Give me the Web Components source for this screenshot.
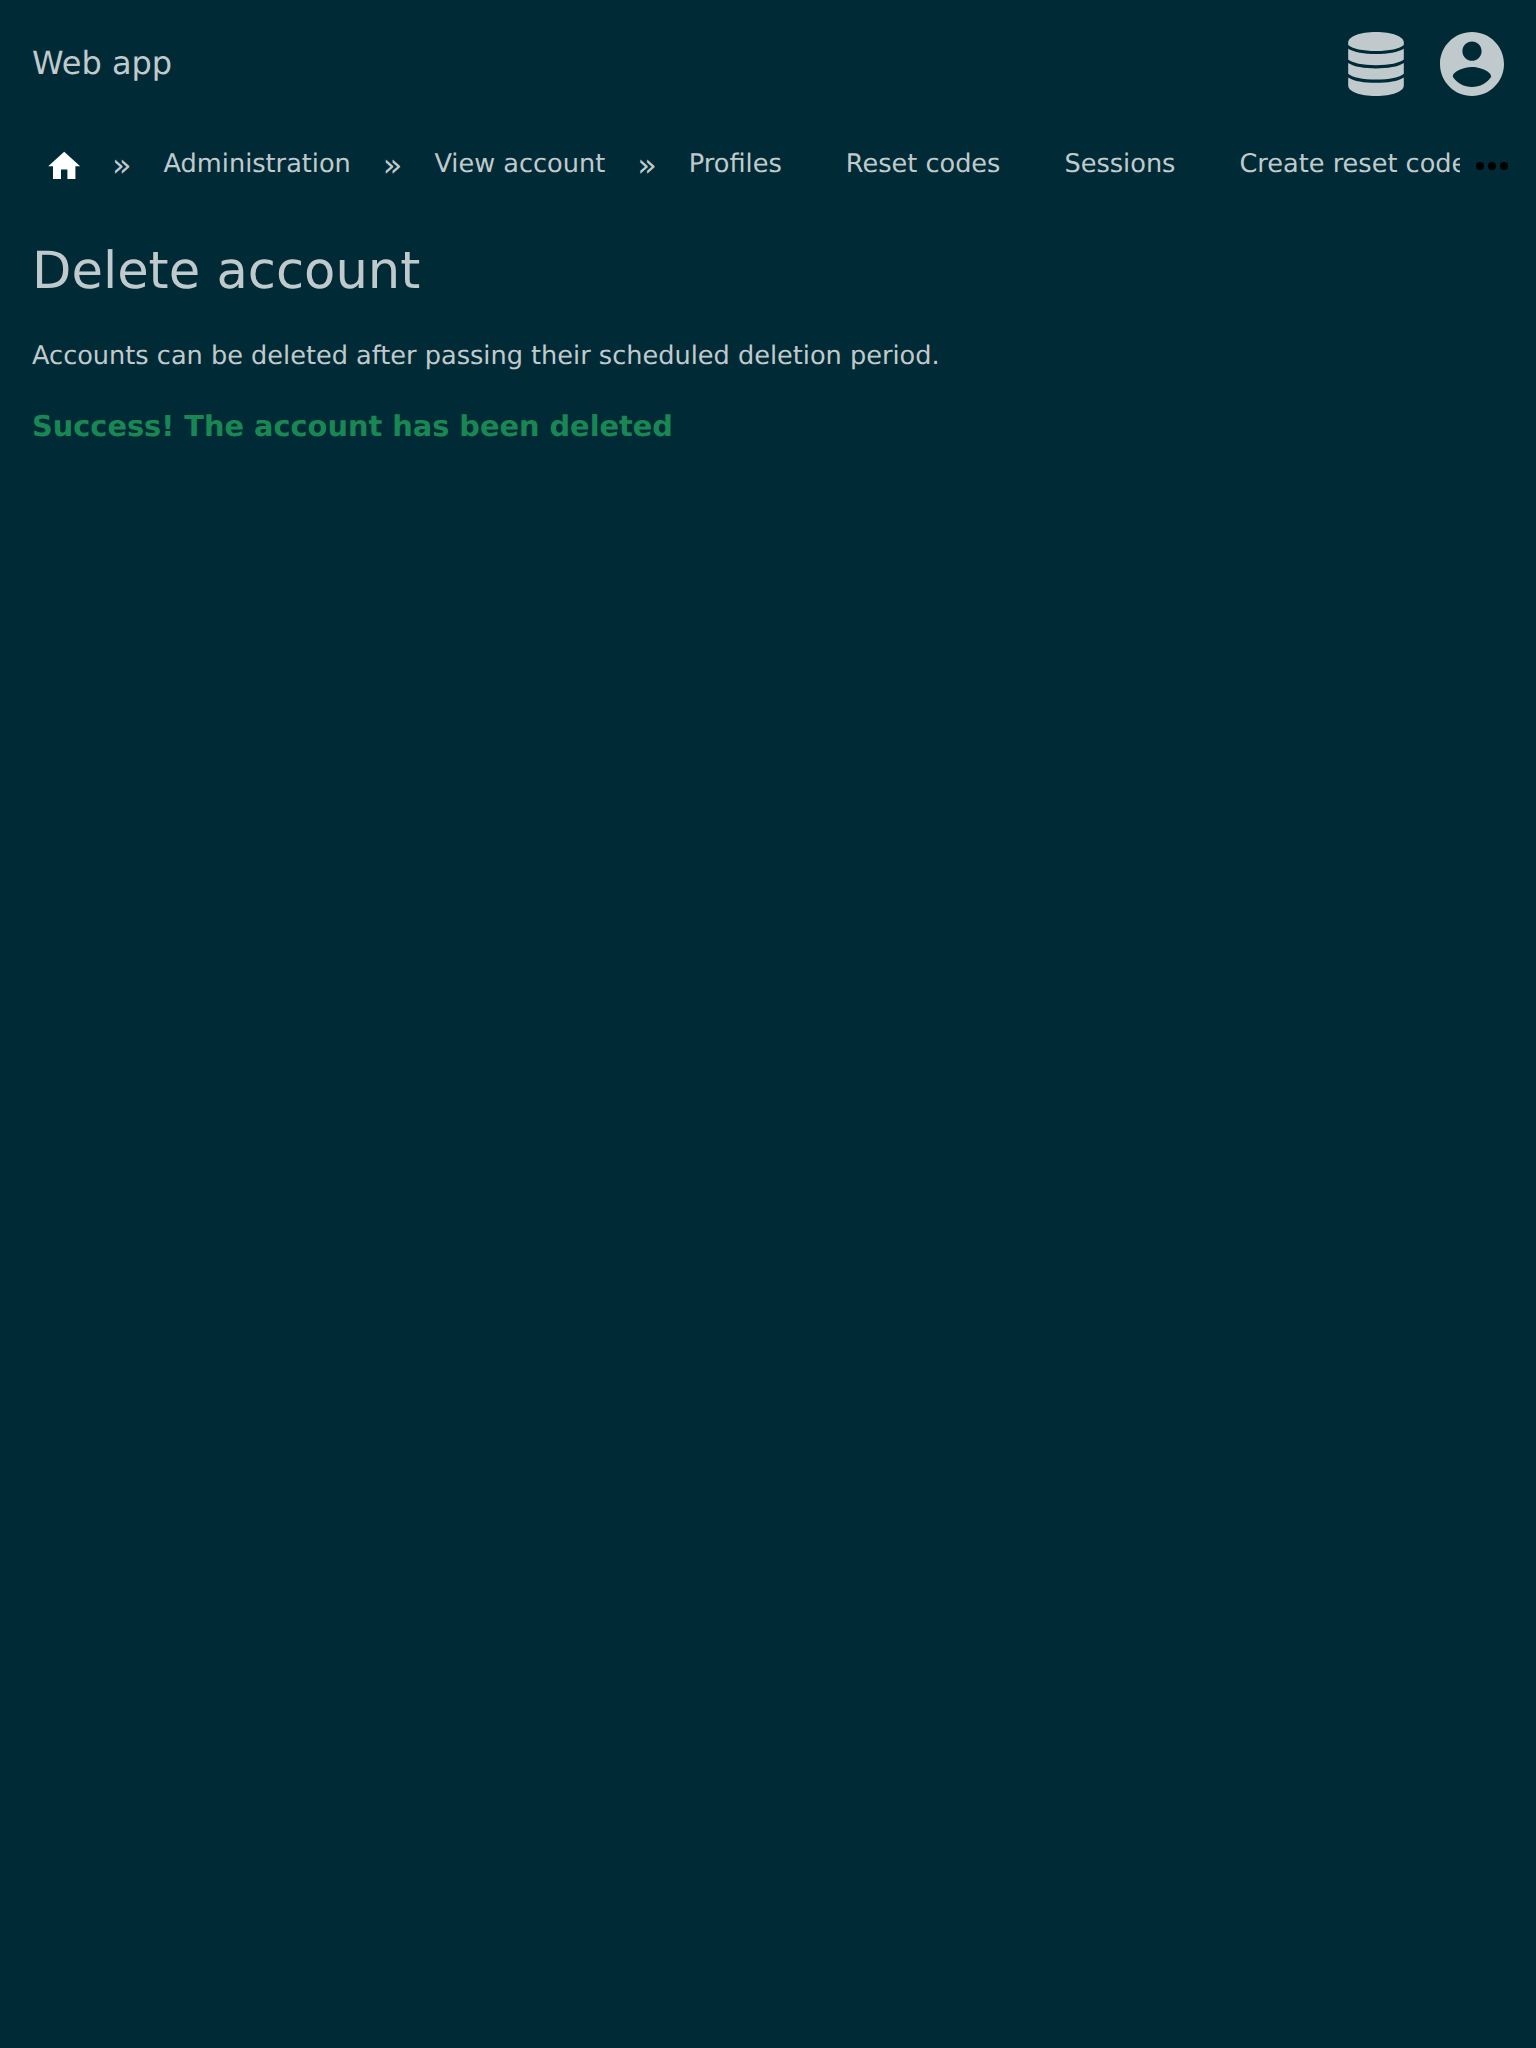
<!DOCTYPE html>
<html lang="en"><head><meta charset="utf-8"><title>Delete account</title>
<style>html{background:#002b36}body{margin:0;font-family:"DejaVu Sans",sans-serif;color:#c0cacd;font-size:25.6px;text-rendering:geometricPrecision}</style></head>
<body>
<app-page>
<app-header slot="header">Web app</app-header>
<crumb-bar slot="nav">
<crumb-home></crumb-home><crumb-sep></crumb-sep>
<crumb-link>Administration</crumb-link><crumb-sep></crumb-sep>
<crumb-link>View account</crumb-link><crumb-sep></crumb-sep>
<crumb-link>Profiles</crumb-link><crumb-link>Reset codes</crumb-link><crumb-link>Sessions</crumb-link><crumb-link>Create reset code</crumb-link>
</crumb-bar>
<account-message><span slot="title">Delete account</span><span slot="text">Accounts can be deleted after passing their scheduled deletion period.</span><span slot="status">Success! The account has been deleted</span></account-message>
</app-page>
<script>
function define(name, html){
  const t=document.createElement('template');t.innerHTML=html;
  customElements.define(name,class extends HTMLElement{
    constructor(){super();this.attachShadow({mode:'open'}).append(t.content.cloneNode(true));}
  });
}
define('app-page',`<style>:host{display:flex;flex-direction:column;min-height:100vh}</style><slot name="header"></slot><slot name="nav"></slot><main><slot></slot></main>`);
define('app-header',`<style>:host{display:flex;align-items:center;justify-content:space-between;height:128px;padding:0 32px;font-size:32px;box-sizing:border-box}
.icons{display:flex;gap:32px}svg{display:block;width:64px;height:64px;fill:currentColor}span{padding-bottom:2px}</style>
<span><slot></slot></span><div class="icons">
<svg viewBox="0 0 64 64"><path d="M4.2 10.5C4.2 4.5 16 0 32 0S59.8 4.5 59.8 10.5V13C56 16.8 45 19 32 19S8 16.8 4.2 13Z"/><path d="M4.2 16.7C10 20.3 20 22 32 22S54 20.3 59.8 16.7V27.5C56 31 45 33.2 32 33.2S8 31 4.2 27.5Z"/><path d="M4.2 31C10 34.8 20 36.4 32 36.4S54 34.8 59.8 31V41.8C56 45.5 45 47.6 32 47.6S8 45.5 4.2 41.8Z"/><path d="M4.2 45.4C10 49.2 20 50.8 32 50.8S54 49.2 59.8 45.4V53.5C59.8 59.5 48 64 32 64S4.2 59.5 4.2 53.5Z"/></svg>
<svg viewBox="2 2 20 20"><path d="M12 2C6.48 2 2 6.48 2 12s4.48 10 10 10 10-4.48 10-10S17.52 2 12 2zm0 3c1.66 0 3 1.34 3 3s-1.34 3-3 3-3-1.34-3-3 1.34-3 3-3zm0 14.2c-2.5 0-4.71-1.28-6-3.22.03-1.99 4-3.08 6-3.08 1.99 0 5.97 1.09 6 3.08-1.29 1.94-3.5 3.22-6 3.22z"/></svg></div>`);
define('crumb-bar',`<style>:host{display:flex;height:72px;align-items:center;padding:0 28px 0 12.8px}
.track{display:flex;align-items:center;flex:1;min-width:0;overflow:hidden;height:72px}
svg{flex:none;display:block;width:32px;height:8px;margin:4px 0 0 16px}</style><div class="track"><slot></slot></div><svg viewBox="0 0 32 8"><circle cx="4" cy="4" r="4"/><circle cx="16" cy="4" r="4"/><circle cx="28" cy="4" r="4"/></svg>`);
define('crumb-home',`<style>:host{display:block;flex:none;padding:5px 28.8px 0 32px}svg{display:block;width:38.4px;height:38.4px;fill:#fff}</style><svg viewBox="0 0 24 24"><path d="M10 20v-6h4v6h5v-8h3L12 3 2 12h3v8z"/></svg>`);
define('crumb-link',`<style>:host{display:block;flex:none;padding:0 32px;line-height:32px;white-space:nowrap}</style><slot></slot>`);
define('crumb-sep',`<style>:host{display:block;flex:none;padding-top:2px;line-height:38px;font-size:32px}</style>»`);
define('account-message',`<style>:host{display:flex;flex-direction:column;padding:39.6px 32px}
h1,p{margin:0;font-weight:400}h1{font-size:51.2px;line-height:62px}.text{line-height:32px;margin-top:38px}.ok{font-size:28.8px;line-height:36px;margin-top:36.2px;font-weight:700;color:#198754}</style>
<h1><slot name="title"></slot></h1><p class="text"><slot name="text"></slot></p><p class="ok"><slot name="status"></slot></p>`);
</script></body></html>
